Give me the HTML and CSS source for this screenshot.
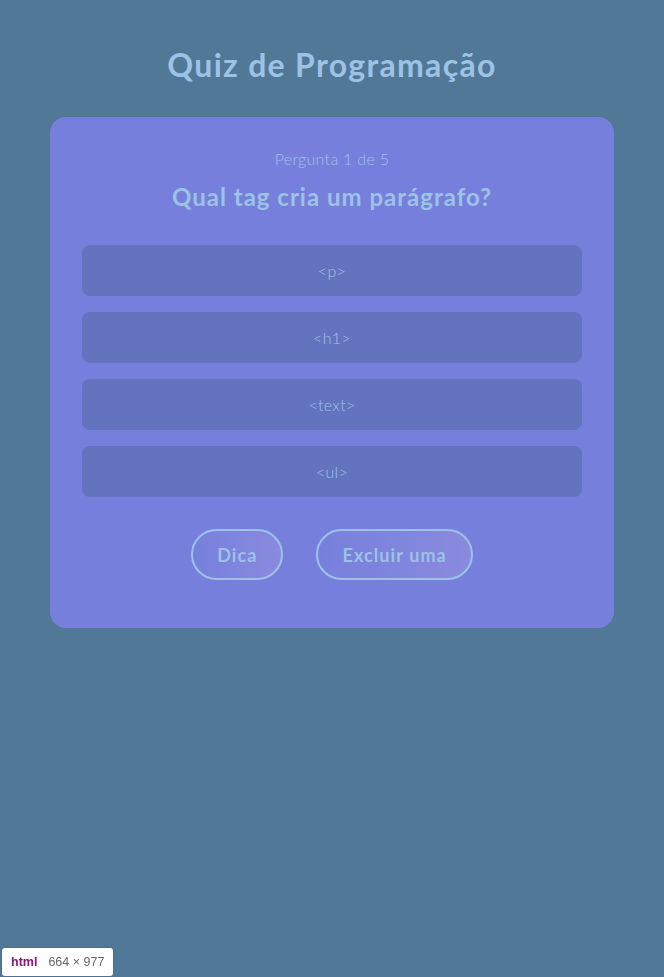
FILE: index.html
```html
<!DOCTYPE html>
<html lang="pt">
<head>
<meta charset="utf-8">
<title>Quiz de Programação</title>
<link rel="stylesheet" href="styles.css">
</head>
<body>
<main class="page">
  <h1 class="title">Quiz de Programação</h1>
  <section class="card">
    <p class="progress">Pergunta 1 de 5</p>
    <h2 class="question">Qual tag cria um parágrafo?</h2>
    <div class="options">
      <button class="option">&lt;p&gt;</button>
      <button class="option">&lt;h1&gt;</button>
      <button class="option">&lt;text&gt;</button>
      <button class="option">&lt;ul&gt;</button>
    </div>
    <div class="actions">
      <button class="pill">Dica</button>
      <button class="pill">Excluir uma</button>
    </div>
  </section>
</main>
<div class="inspect"><span class="tag">html</span><span class="dims">664 × 977</span></div>
</body>
</html>
```
FILE: styles.css
```css
* { box-sizing: border-box; }
html, body { margin: 0; padding: 0; }
body {
  background: #527898;
  font-family: Lato, "Open Sans", sans-serif;
  color: #9cc3e6;
  min-height: 977px;
}
.page {
  padding: 46px 50px;
  display: flex;
  flex-direction: column;
  align-items: center;
}
.title {
  margin: 0 0 33px;
  font-size: 32px;
  font-weight: 700;
  line-height: 38px;
  letter-spacing: 1.3px;
  color: #9cc3e6;
}
.card {
  width: 564px;
  background: #7680dc;
  border-radius: 16px;
  padding: 32px 32px 48px;
  text-align: center;
}
.progress {
  margin: 0 0 12px;
  font-size: 16px;
  font-weight: 300;
  line-height: 20px;
  letter-spacing: 0.3px;
}
.question {
  margin: 0 0 32px;
  font-size: 24px;
  font-weight: 700;
  line-height: 32px;
  letter-spacing: 1px;
}
.options {
  display: flex;
  flex-direction: column;
  gap: 16px;
}
.option {
  height: 51px;
  border: none;
  border-radius: 8px;
  background: #6373be;
  color: #9cc3e6;
  font-family: inherit;
  font-size: 16px;
  font-weight: 300;
  letter-spacing: 0.3px;
}
.actions {
  display: flex;
  justify-content: center;
  gap: 33px;
  margin-top: 32px;
}
.pill {
  height: 51px;
  padding: 0 24px;
  border: 2px solid #9cc3e6;
  border-radius: 999px;
  background: linear-gradient(90deg, #7680dc, #8a8ade);
  color: #9cc3e6;
  font-family: inherit;
  font-size: 18px;
  font-weight: 700;
  letter-spacing: 1.1px;
}
.inspect {
  position: fixed;
  left: 2px;
  bottom: 1px;
  height: 28px;
  padding: 0 9px;
  background: #fff;
  border-radius: 3px;
  display: flex;
  align-items: center;
  gap: 11px;
  font-family: "Liberation Sans", Arial, sans-serif;
  font-size: 12.5px;
  box-shadow: 0 0 2px rgba(0,0,0,0.2);
}
.tag { color: #881280; font-weight: 700; }
.dims { color: #666; }
```
